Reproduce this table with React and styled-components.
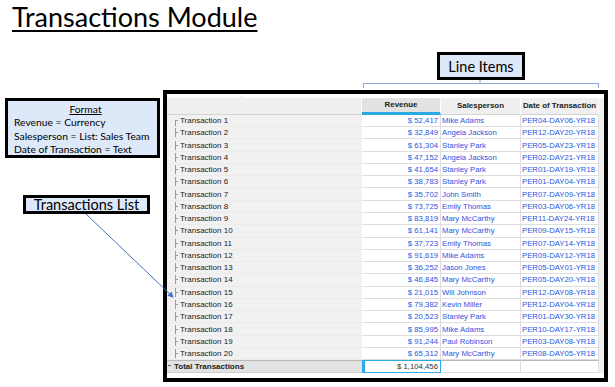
import React from 'react'
import styled, { createGlobalStyle } from 'styled-components'

const GlobalStyle = createGlobalStyle`
  html, body {
    margin: 0;
    padding: 0;
    background: #fff;
  }
  body {
    font-family: "Liberation Sans", Arial, sans-serif;
  }
`

const Page = styled.div`
  position: relative;
  width: 615px;
  height: 387px;
  overflow: hidden;
  background: #fff;
`

const Title = styled.h1`
  margin: 0;
  height: 46px;
  box-sizing: border-box;
  padding: 3px 0 0 12px;
  font-family: Lato, "Liberation Sans", sans-serif;
  font-weight: 400;
  font-size: 27px;
  line-height: 28px;
  color: #000;
  text-decoration: underline;
  text-decoration-thickness: 2px;
  text-underline-offset: 3px;
`

const Content = styled.div`
  display: flex;
`

const SideColumn = styled.div`
  width: 163px;
  display: flex;
  flex-direction: column;
  align-items: flex-start;
`

const Callout = styled.div`
  box-sizing: border-box;
  background: #dde9f8;
  border: 3px solid #000;
  color: #000;
  font-family: Lato, "Liberation Sans", sans-serif;
`

const FormatBox = styled(Callout)`
  margin: 52px 0 0 5px;
  width: 155px;
  height: 60px;
  padding: 2px 0 0 6px;
  font-size: 10.3px;
  line-height: 13.3px;
`

const FormatHeading = styled.div`
  text-align: center;
  text-decoration: underline;
`

const LabelBox = styled(Callout)`
  display: flex;
  align-items: center;
  justify-content: center;
  width: ${p => p.$w}px;
  height: ${p => p.$h}px;
  margin-top: ${p => p.$top}px;
  margin-left: ${p => p.$left || 0}px;
  font-size: 14.5px;
`

const MainColumn = styled.div`
  display: flex;
  flex-direction: column;
`

const Annotation = styled.div`
  margin-left: 200px;
  width: 236px;
  display: flex;
  flex-direction: column;
  align-items: center;
`

const Bracket = styled.svg`
  display: block;
  width: 236px;
  height: 9px;
`

const Frame = styled.div`
  margin-top: 1px;
  width: 445px;
  height: 292px;
  box-sizing: border-box;
  border: 4px solid #000;
  padding: 2px 0 5px;
  background: #fff;
  display: flex;
  flex-direction: column;
  font-size: 7.75px;
  color: #222;
`

const Row = styled.div`
  display: grid;
  grid-template-columns: 195px 79px 80px 78px 1fr;
  height: ${p => p.$h}px;
`

const HeadCell = styled.div`
  box-sizing: border-box;
  display: flex;
  align-items: center;
  justify-content: center;
  font-size: 7.9px;
  font-weight: 700;
  color: #222;
  background: ${p => (p.$active ? '#e2e2e2' : '#efefef')};
  border-right: 1px solid #fff;
  border-bottom: ${p => (p.$active ? '3px solid #29a8e2' : '1px solid #d4d4d4')};
  white-space: nowrap;
`

const LabelCell = styled.div`
  box-sizing: border-box;
  display: flex;
  align-items: center;
  font-size: 8px;
  background: ${p => (p.$total ? '#e3e3e3' : '#f1f1f1')};
  border-bottom: 1px solid ${p => (p.$total ? '#d0d0d0' : '#ebebeb')};
  border-top: ${p => (p.$total ? '1px solid #b8b8b8' : 'none')};
  font-weight: ${p => (p.$total ? 700 : 400)};
  color: #222;
`

const Branch = styled.span`
  position: relative;
  align-self: ${p => (p.$first ? 'flex-end' : 'center')};
  width: 3px;
  height: ${p => (p.$first ? 6 : 9)}px;
  margin: 0 1px 0 8px;
  border-left: 1px solid #9a9a9a;

  &::after {
    content: '';
    position: absolute;
    left: 0;
    top: ${p => (p.$first ? 0 : 4)}px;
    width: 2px;
    border-top: 1px solid #9a9a9a;
  }
`

const Collapse = styled.span`
  width: 3px;
  margin: 0 3px 3px 1px;
  border-top: 1px solid #555;
`

const DataCell = styled.div`
  box-sizing: border-box;
  display: flex;
  align-items: center;
  justify-content: ${p => (p.$right ? 'flex-end' : 'flex-start')};
  padding: ${p => (p.$right ? '0 2px 0 0' : '0 0 0 1px')};
  background: #fff;
  color: #2d55e2;
  border-bottom: 1px solid #dedede;
  border-right: 1px solid #dedede;
  white-space: nowrap;
  overflow: hidden;
`

const TotalCell = styled(DataCell)`
  color: #333;
  border: 1px solid #2aaae2;
  border-left-width: 3px;
`

const PlainCell = styled(DataCell)`
  border-top: 1px solid #b8b8b8;
`

const Filler = styled.div`
  background: #efefef;
`

const HeadStrip = styled.div`
  height: 2px;
  display: grid;
  grid-template-columns: 75px 1fr;
`

const StripMark = styled.div`
  border-right: 1px solid #d8d8d8;
`

const Pointer = styled.svg`
  position: absolute;
  left: 0;
  top: 0;
  width: 615px;
  height: 387px;
  pointer-events: none;
`

const rows = [
  [52417, 'Mike Adams', 'PER04-DAY06-YR18'],
  [32849, 'Angela Jackson', 'PER12-DAY20-YR18'],
  [61304, 'Stanley Park', 'PER05-DAY23-YR18'],
  [47152, 'Angela Jackson', 'PER02-DAY21-YR18'],
  [41654, 'Stanley Park', 'PER01-DAY19-YR18'],
  [38783, 'Stanley Park', 'PER01-DAY04-YR18'],
  [35702, 'John Smith', 'PER07-DAY09-YR18'],
  [73725, 'Emily Thomas', 'PER03-DAY06-YR18'],
  [83819, 'Mary McCarthy', 'PER11-DAY24-YR18'],
  [61141, 'Mary McCarthy', 'PER09-DAY15-YR18'],
  [37723, 'Emily Thomas', 'PER07-DAY14-YR18'],
  [91619, 'Mike Adams', 'PER09-DAY12-YR18'],
  [36252, 'Jason Jones', 'PER05-DAY01-YR18'],
  [46845, 'Mary McCarthy', 'PER05-DAY20-YR18'],
  [21015, 'Will Johnson', 'PER12-DAY08-YR18'],
  [79382, 'Kevin Miller', 'PER12-DAY04-YR18'],
  [20523, 'Stanley Park', 'PER01-DAY30-YR18'],
  [85995, 'Mike Adams', 'PER10-DAY17-YR18'],
  [91244, 'Paul Robinson', 'PER03-DAY08-YR18'],
  [65312, 'Mary McCarthy', 'PER08-DAY05-YR18'],
]

const money = n => '$ ' + n.toLocaleString('en-US')

export default function App() {
  return (
    <Page>
      <GlobalStyle />
      <Title>Transactions Module</Title>
      <Content>
        <SideColumn>
          <FormatBox>
            <FormatHeading>Format</FormatHeading>
            <div>Revenue = Currency</div>
            <div>Salesperson = List: Sales Team</div>
            <div>Date of Transaction = Text</div>
          </FormatBox>
          <LabelBox $w={127} $h={19} $top={37} $left={23}>Transactions List</LabelBox>
        </SideColumn>

        <MainColumn>
          <Annotation>
            <LabelBox $w={88} $h={28} $top={6}>Line Items</LabelBox>
            <Bracket viewBox="0 0 236 9">
              <path d="M0.5 8 V3.5 H235.5 V8 M117 0 V3.5" fill="none" stroke="#8eaadb" strokeWidth="1.2" />
            </Bracket>
          </Annotation>

          <Frame>
            <HeadStrip>
              <StripMark />
              <div />
            </HeadStrip>
            <Row $h={17}>
              <HeadCell />
              <HeadCell $active>Revenue</HeadCell>
              <HeadCell>Salesperson</HeadCell>
              <HeadCell>Date of Transaction</HeadCell>
              <Filler />
            </Row>
            {rows.map(([rev, who, date], i) => (
              <Row key={i} $h={12.35}>
                <LabelCell>
                  <Branch $first={i === 0} />
                  Transaction {i + 1}
                </LabelCell>
                <DataCell $right>{money(rev)}</DataCell>
                <DataCell>{who}</DataCell>
                <DataCell>{date}</DataCell>
                <Filler />
              </Row>
            ))}
            <Row $h={13}>
              <LabelCell $total>
                <Collapse />
                Total Transactions
              </LabelCell>
              <TotalCell $right>{money(1104456)}</TotalCell>
              <PlainCell />
              <PlainCell />
              <Filler />
            </Row>
          </Frame>
        </MainColumn>
      </Content>

      <Pointer viewBox="0 0 615 387">
        <defs>
          <marker id="tip" markerWidth="6" markerHeight="6" refX="5" refY="3" orient="auto" markerUnits="userSpaceOnUse">
            <path d="M0 0 L6 3 L0 6 z" fill="#4472c4" />
          </marker>
        </defs>
        <line x1="86" y1="214" x2="173" y2="297" stroke="#4472c4" strokeWidth="1" markerEnd="url(#tip)" />
      </Pointer>
    </Page>
  )
}
